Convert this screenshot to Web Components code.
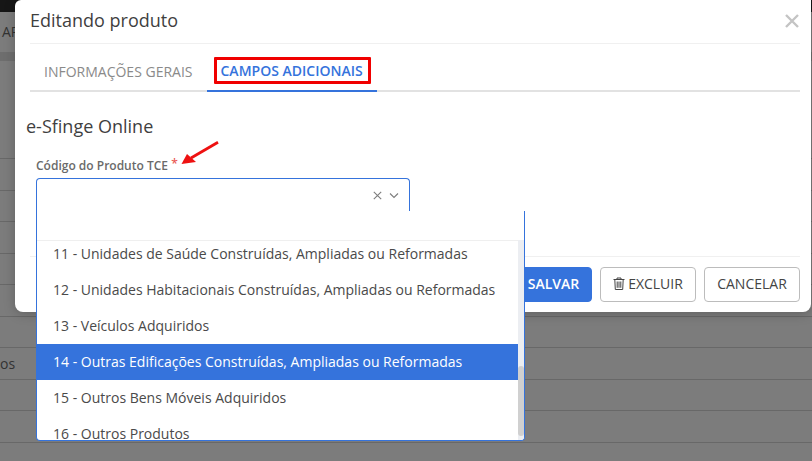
<!DOCTYPE html>
<html lang="pt-BR">
<head>
<meta charset="utf-8">
<title>Editando produto</title>
<style>
  html, body { margin: 0; height: 100%; overflow: hidden; }
  body { background: #7c7c7c; font-family: "Open Sans", sans-serif; color: #3c3c3c; position: relative; }
</style>
</head>
<body>
<page-backdrop></page-backdrop>

<edit-modal heading="Editando produto">
  <tab-bar slot="tabs">
    <tab-item>INFORMAÇÕES GERAIS</tab-item>
    <tab-item active marked>CAMPOS ADICIONAIS</tab-item>
  </tab-bar>

  <section-title>e-Sfinge Online</section-title>

  <select-field label="Código do Produto TCE">
    <list-option>11 - Unidades de Saúde Construídas, Ampliadas ou Reformadas</list-option>
    <list-option>12 - Unidades Habitacionais Construídas, Ampliadas ou Reformadas</list-option>
    <list-option>13 - Veículos Adquiridos</list-option>
    <list-option selected>14 - Outras Edificações Construídas, Ampliadas ou Reformadas</list-option>
    <list-option>15 - Outros Bens Móveis Adquiridos</list-option>
    <list-option>16 - Outros Produtos</list-option>
  </select-field>

  <action-button slot="actions" kind="primary">SALVAR</action-button>
  <action-button slot="actions" icon="trash">EXCLUIR</action-button>
  <action-button slot="actions">CANCELAR</action-button>
</edit-modal>

<script>
function shadow(el, html) {
    el.attachShadow({mode: "open"});
    el.shadowRoot.innerHTML = html;
}

class PageBackdrop extends HTMLElement {
    connectedCallback() {
        shadow(this, `
        <style>
          :host { display: block; height: 461px; overflow: hidden; font-size: 14px; color: #333; }
          .top { height: 12px; background: #161616; }
          .head { height: 40px; line-height: 40px; padding-left: 2px; background: #7c7c7c; }
          .band { height: 9px; background: #6e6e6e; }
          .spacer { height: 97px; }
          .row { height: 31.5px; box-sizing: border-box; border-top: 1px solid #686868; line-height: 31px; }
        </style>
        <div class="top"></div>
        <div class="head">AR</div>
        <div class="band"></div>
        <div class="spacer"></div>
        <div class="row"></div>
        <div class="row"></div>
        <div class="row"></div>
        <div class="row"></div>
        <div class="row"></div>
        <div class="row"></div>
        <div class="row">os</div>
        <div class="row"></div>
        <div class="row"></div>
        <div class="row"></div>`);
    }
}

class EditModal extends HTMLElement {
    connectedCallback() {
        shadow(this, `
        <style>
          :host {
            position: absolute; left: 15px; top: 0; width: 796px; height: 312px;
            background: #fff; border-radius: 6px 0 8px 8px; display: flex; flex-direction: column;
            box-sizing: border-box; padding: 0 11px 10px 15px; box-shadow: 0 2px 12px rgba(0,0,0,.22);
          }
          header {
            height: 43px; border-bottom: 1px solid #f0f0f0; flex: none;
            display: flex; align-items: center; justify-content: space-between;
          }
          h1 { margin: 0; font-size: 18px; font-weight: 400; color: #3f3f3f; position: relative; top: -2px; }
          svg { display: block; margin-right: 1px; position: relative; top: -1px; }
          .body { flex: 1; }
          footer {
            border-top: 1px solid #f0f0f0; padding-top: 10px; flex: none;
            display: flex; justify-content: flex-end; gap: 8px;
          }
        </style>
        <header>
          <h1>${this.getAttribute("heading")}</h1>
          <svg width="14" height="14" viewBox="0 0 14 14"><path d="M1 1L13 13M13 1L1 13" stroke="#c4c4c4" stroke-width="2.4"/></svg>
        </header>
        <slot name="tabs"></slot>
        <div class="body"><slot></slot></div>
        <footer><slot name="actions"></slot></footer>`);
    }
}

class TabBar extends HTMLElement {
    connectedCallback() {
        shadow(this, `
        <style>
          :host { display: flex; height: 46px; border-bottom: 2px solid #e2e2e2; }
        </style>
        <slot></slot>`);
    }
}

class TabItem extends HTMLElement {
    connectedCallback() {
        shadow(this, `
        <style>
          :host {
            display: flex; align-items: center; padding: 7px 14px 0; height: 48px; box-sizing: border-box;
            font-size: 14px; color: #8a8a8a; position: relative; white-space: nowrap;
          }
          :host([active]) { color: #3573dc; font-weight: 600; border-bottom: 2px solid #3573dc; }
          :host([marked]) i {
            position: absolute; left: 7px; right: 6px; top: 13px; height: 27px;
            box-sizing: border-box; border: 3px solid #f00000; border-radius: 1px;
          }
        </style>
        <i></i><span><slot></slot></span>`);
    }
}

class SectionTitle extends HTMLElement {
    connectedCallback() {
        shadow(this, `
        <style>
          :host { display: block; font-size: 18px; color: #3f3f3f; margin: 23px 0 0 -4px; line-height: 24px; position: relative; top: -1px; }
        </style>
        <slot></slot>`);
    }
}

class SelectField extends HTMLElement {
    connectedCallback() {
        shadow(this, `
        <style>
          :host { display: block; position: relative; margin: 18px 0 0 6px; width: 374px; }
          label { display: block; font-size: 12px; font-weight: 600; color: #6a6a6a; line-height: 16px; position: relative; top: 1px; }
          b { color: #ea5a55; font-weight: 600; font-size: 12px; position: relative; top: -2px; }
          .box {
            margin-top: 5px; height: 33px; box-sizing: border-box; border: 1px solid #3573dc; border-bottom: 0;
            border-radius: 4px 4px 0 0; background: #fff; display: flex; justify-content: flex-end;
            align-items: flex-start; gap: 7px; padding: 12px 10px 0 0; position: relative; z-index: 2;
          }
          svg { display: block; }
          .menu {
            position: absolute; left: 0; top: 54px; width: 489px; height: 230px; box-sizing: border-box;
            border: 1px solid #3573dc; border-top: 0; border-radius: 0 0 4px 4px; background: #fff;
            z-index: 1; padding-top: 29px; overflow: hidden;
          }
          .list { height: 200px; border-top: 1px solid #efefef; overflow: hidden; margin-right: 6px; box-sizing: border-box; }
          ::slotted(:first-child) { margin-top: -5px; }
          .track {
            position: absolute; right: 0; top: 29px; bottom: 0; width: 6px; background: #eceef2;
          }
          .thumb {
            position: absolute; right: 0; top: 126px; height: 70px; width: 6px; background: #d0d0d0; border-radius: 3px;
          }
          .arrow { position: absolute; left: 144px; top: -17px; z-index: 3; }
        </style>
        <label>${this.getAttribute("label")} <b>*</b></label>
        <svg class="arrow" width="40" height="26" viewBox="0 0 40 26">
          <path d="M38 2.2L11 18" stroke="#ee1111" stroke-width="2.8" fill="none"/>
          <path d="M1.5 24L7 14L16 22Z" fill="#ee1111"/>
        </svg>
        <div class="box">
          <svg width="9" height="9" viewBox="0 0 9 9"><path d="M.8 .8L8.2 8.2M8.2 .8L.8 8.2" stroke="#7d7d7d" stroke-width="1.1" fill="none"/></svg>
          <svg width="10" height="9" viewBox="0 0 10 9"><path d="M1 2.5L5 6.5L9 2.5" stroke="#7d7d7d" stroke-width="1.1" fill="none"/></svg>
        </div>
        <div class="menu">
          <div class="list"><slot></slot></div>
          <div class="track"><div class="thumb"></div></div>
        </div>`);
    }
}

class ListOption extends HTMLElement {
    connectedCallback() {
        shadow(this, `
        <style>
          :host {
            display: block; height: 36px; line-height: 36px; padding-left: 16px; font-size: 14px;
            color: #4a4a4a; white-space: nowrap;
          }
          :host([selected]) { background: #3573dc; color: #fff; }
        </style>
        <slot></slot>`);
    }
}

class ActionButton extends HTMLElement {
    connectedCallback() {
        const trash = this.getAttribute("icon") === "trash" ? `
          <svg width="12" height="13" viewBox="0 0 12 13" fill="none" stroke="#444" stroke-width="1">
            <path d="M.5 2.5H11.5M4 2.5V1H8V2.5M1.8 2.5L2.3 12.5H9.7L10.2 2.5"/>
            <path d="M4.2 4.5V10.8M6 4.5V10.8M7.8 4.5V10.8"/>
          </svg>` : "";
        shadow(this, `
        <style>
          :host {
            display: inline-flex; align-items: center; justify-content: center; gap: 3px; height: 35px; width: 96px;
            padding: 0 0 2px; box-sizing: border-box; border: 1px solid #bcbcbc; border-radius: 4px; background: #fff;
            font-size: 14px; color: #444; white-space: nowrap;
          }
          :host([kind="primary"]) { width: 77px; background: #3573dc; border-color: #3573dc; color: #fff; font-weight: 600; }
          svg { display: block; }
        </style>
        ${trash}<slot></slot>`);
    }
}

customElements.define("page-backdrop", PageBackdrop);
customElements.define("edit-modal", EditModal);
customElements.define("tab-bar", TabBar);
customElements.define("tab-item", TabItem);
customElements.define("section-title", SectionTitle);
customElements.define("select-field", SelectField);
customElements.define("list-option", ListOption);
customElements.define("action-button", ActionButton);
</script>
</body>
</html>
